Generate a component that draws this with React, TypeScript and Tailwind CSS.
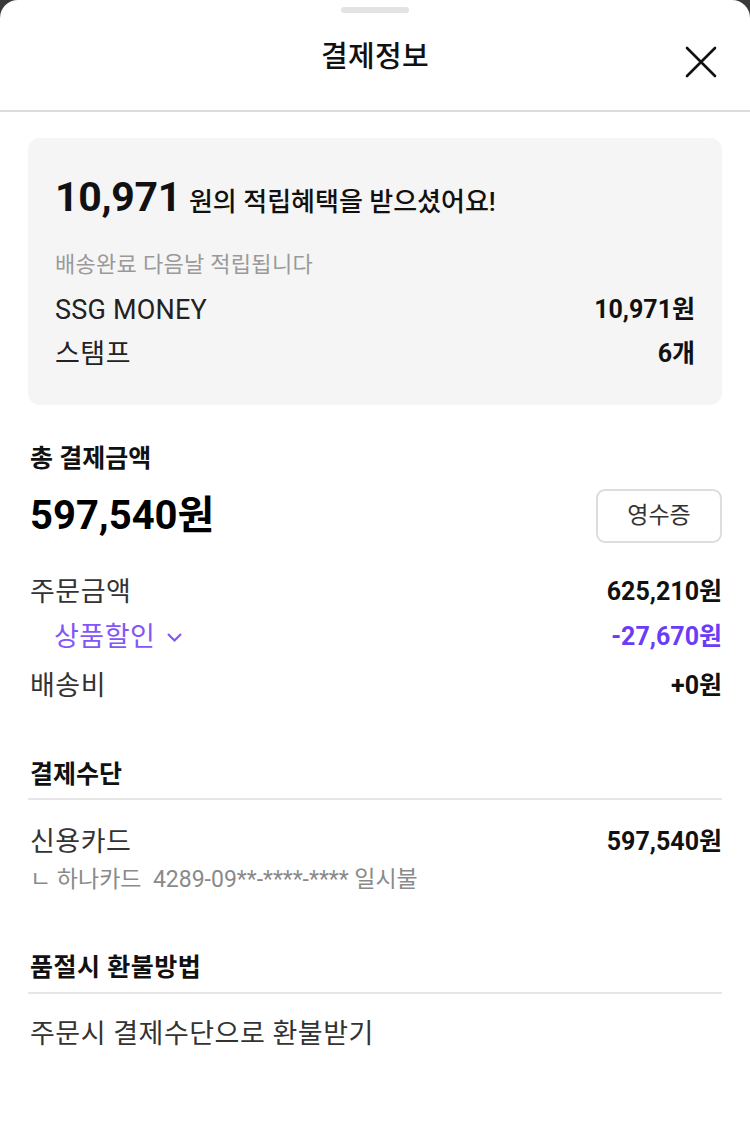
import React from "react";

const ko = { fontFamily: 'Roboto, "Noto Sans CJK KR", sans-serif' };

export default function App() {
  return (
    <div className="w-[750px] h-[1129px] bg-[#3a3a3a] overflow-hidden" style={ko}>
      <div className="h-full bg-white rounded-t-[18px] flex flex-col">
        <div className="relative h-[112px] border-b-2 border-[#dcdcdc] flex flex-col items-center">
          <div className="mt-[7px] w-[68px] h-[6px] rounded-full bg-[#e3e3e3]" />
          <div className="mt-[26px] text-[29px] leading-[36px] font-medium text-[#111] tracking-[0.3px]">결제정보</div>
          <svg className="absolute right-[33px] top-[46px]" width="32" height="32" viewBox="0 0 32 32">
            <path d="M2 2 L30 30 M30 2 L2 30" stroke="#111" strokeWidth="2.6" strokeLinecap="round" />
          </svg>
        </div>

        <div className="px-[28px] pt-[26px]">
          <div className="bg-[#f5f5f5] rounded-[12px] px-[27px] pt-[35px] h-[267px]">
            <div className="flex items-baseline gap-[8px] text-[#111] h-[48px]">
              <span className="text-[41px] font-bold leading-[48px] tracking-[-0.3px]">10,971</span>
              <span className="text-[26px] font-medium leading-[48px]">원의 적립혜택을 받으셨어요!</span>
            </div>
            <div className="mt-[29px] text-[22px] text-[#9a9a9a] tracking-[0.3px] leading-[30px]">배송완료 다음날 적립됩니다</div>
            <div className="mt-[12px] flex items-center justify-between h-[36px] text-[#222]">
              <div className="text-[27px] leading-[36px] tracking-[0.2px]">SSG MONEY</div>
              <div className="text-[25px] font-bold leading-[36px] text-[#111]">10,971원</div>
            </div>
            <div className="mt-[8px] flex items-center justify-between h-[36px] text-[#222]">
              <div className="text-[27px] leading-[36px] tracking-[0.5px]">스탬프</div>
              <div className="text-[25px] font-bold leading-[36px] text-[#111]">6개</div>
            </div>
          </div>
        </div>

        <div className="pl-[30px] pr-[28px]">
          <div className="mt-[37px] text-[25px] font-bold text-[#111] leading-[34px]">총 결제금액</div>
          <div className="mt-[13px] flex items-center justify-between h-[54px]">
            <div className="text-[40px] font-bold text-[#000] leading-[54px]">597,540원</div>
            <button className="w-[126px] h-[54px] rounded-[9px] border-2 border-[#dddddd] text-[23px] text-[#333] bg-white">영수증</button>
          </div>

          <div className="mt-[31px] flex items-center justify-between h-[36px]">
            <div className="text-[27px] leading-[36px] text-[#333] tracking-[0.5px]">주문금액</div>
            <div className="text-[25px] font-bold text-[#111] leading-[36px]">625,210원</div>
          </div>
          <div className="mt-[9px] flex items-center justify-between h-[36px]">
            <div className="flex items-center gap-[11px] pl-[24px]">
              <span className="text-[27px] leading-[36px] text-[#8256f7] tracking-[0.5px]">상품할인</span>
              <svg width="17" height="11" viewBox="0 0 17 11"><path d="M2 2 L8.5 8.5 L15 2" fill="none" stroke="#8256f7" strokeWidth="2.2" /></svg>
            </div>
            <div className="text-[25px] font-bold text-[#6a3cf6] leading-[36px]">-27,670원</div>
          </div>
          <div className="mt-[13px] flex items-center justify-between h-[36px]">
            <div className="text-[27px] leading-[36px] text-[#333] tracking-[0.5px]">배송비</div>
            <div className="text-[25px] font-bold text-[#111] leading-[36px]">+0원</div>
          </div>

          <div className="mt-[54px] text-[25px] font-bold text-[#111] leading-[34px]">결제수단</div>
          <div className="mt-[6px] -ml-[2px] h-[2px] bg-[#e6e6e6]" />
          <div className="mt-[24px] flex items-center justify-between h-[36px]">
            <div className="text-[27px] leading-[36px] text-[#333] tracking-[0.5px]">신용카드</div>
            <div className="text-[25px] font-bold text-[#111] leading-[36px]">597,540원</div>
          </div>
          <div className="mt-[5px] text-[23px] text-[#8a8a8a] leading-[30px]">ㄴ 하나카드&nbsp;&nbsp;4289-09**-****-**** 일시불</div>

          <div className="mt-[56px] text-[25px] font-bold text-[#111] leading-[34px] tracking-[0.5px]">품절시 환불방법</div>
          <div className="mt-[7px] -ml-[2px] h-[2px] bg-[#e6e6e6]" />
          <div className="mt-[22px] text-[27px] text-[#333] leading-[36px] tracking-[0.5px]">주문시 결제수단으로 환불받기</div>
        </div>
      </div>
    </div>
  );
}
